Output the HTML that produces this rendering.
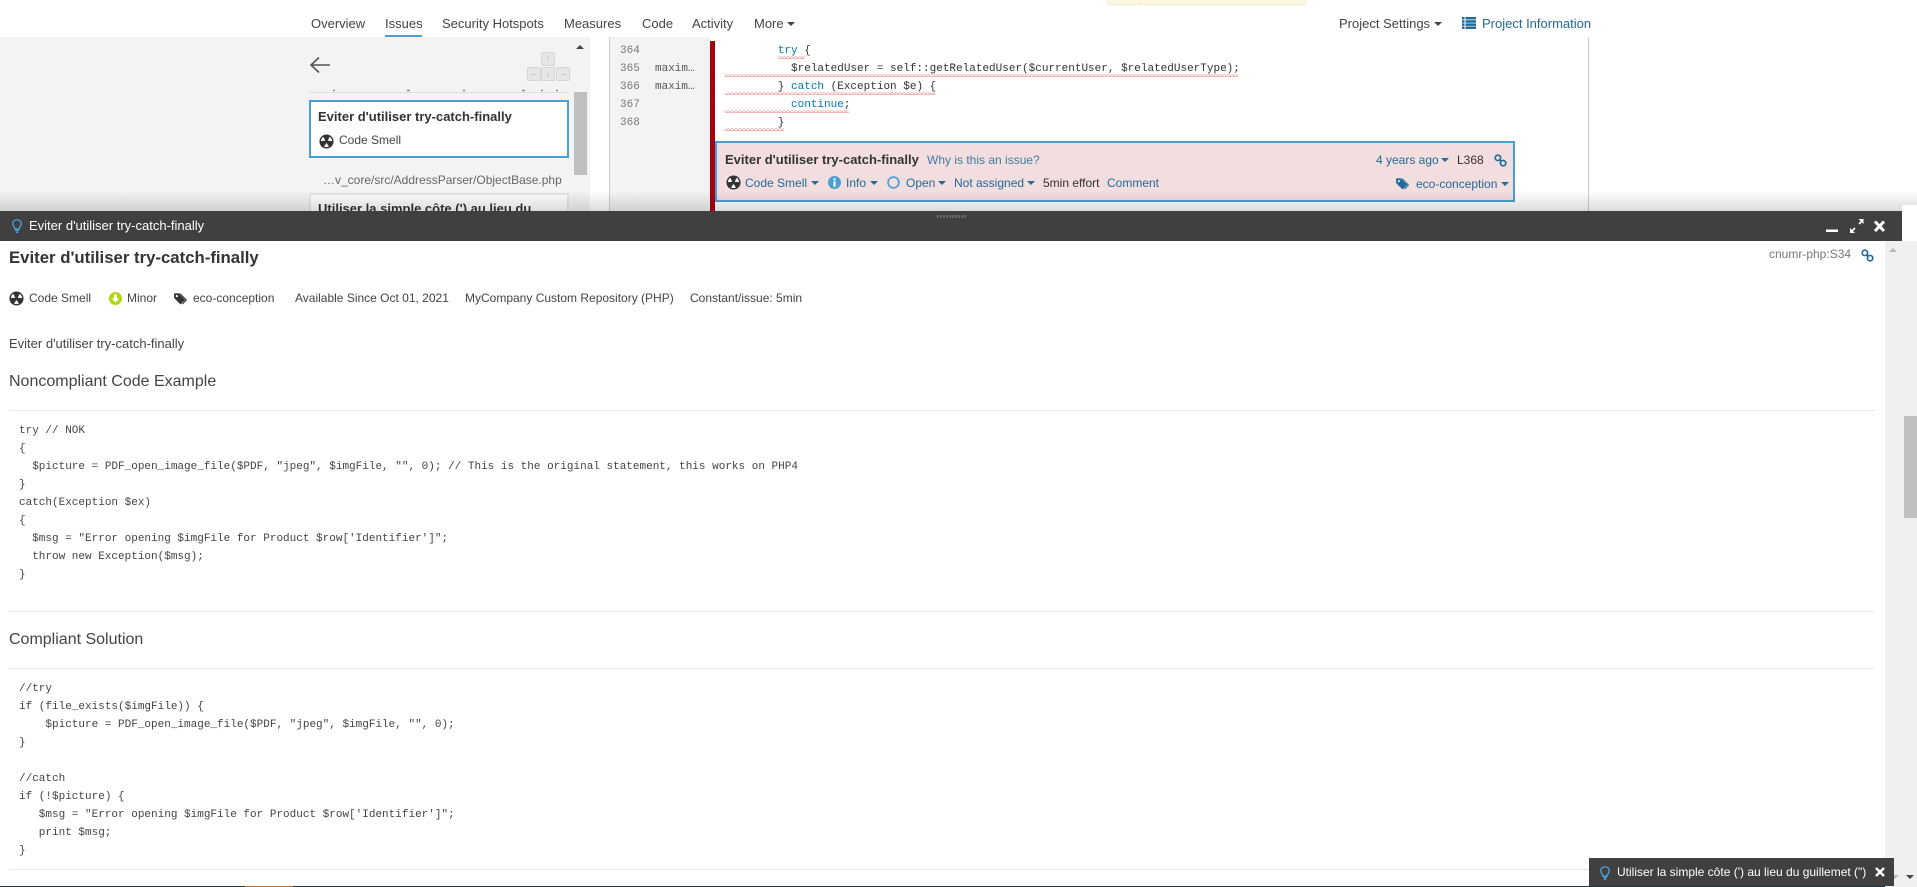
<!DOCTYPE html>
<html lang="en"><head><meta charset="utf-8"><title>Eviter d'utiliser try-catch-finally</title>
<style>
html,body{margin:0;padding:0;width:1917px;height:887px;overflow:hidden;background:#fff}
body{position:relative;font-family:"Liberation Sans",Arial,sans-serif;font-size:12px;color:#444}
.a{position:absolute}
.t{position:absolute;white-space:pre;line-height:18px;height:18px}
.n{font-size:13px;color:#444}
.l{color:#236a97}
.b{font-weight:700;font-size:13px;color:#333}
.m{font-family:"Liberation Mono",monospace;font-size:11px;white-space:pre}
.c{position:absolute;width:0;height:0;border-left:4px solid transparent;border-right:4px solid transparent;border-top:4px solid #444}
.c.bl{border-top-color:#236a97}
.key{position:absolute;box-sizing:border-box;width:14px;height:14px;background:#e6e6e6;border:1px solid #d6d6d6;border-radius:2px;color:#aaa;font-size:8px;line-height:12px;text-align:center}
.hr{position:absolute;left:9px;width:1866px;height:1px;background:#e6e6e6}
.kw{color:#0077b3}
svg{position:absolute;overflow:visible}
</style></head><body>
<svg width="0" height="0" style="left:0;top:0"><defs>
<symbol id="smell" viewBox="0 0 16 16"><circle cx="8" cy="8" r="7.500" fill="#333"/><g fill="#fff"><path d="M8 9.500L5.400 13.300a5.400 5.400 0 0 0 5.200 0z"/><path d="M8 9.500L5.400 13.300a5.400 5.400 0 0 0 5.200 0z" transform="rotate(120 8 8)"/><path d="M8 9.500L5.400 13.300a5.400 5.400 0 0 0 5.200 0z" transform="rotate(-120 8 8)"/></g></symbol>
<symbol id="link" viewBox="0 0 14 14"><g fill="none" stroke="currentColor" stroke-width="1.800"><circle cx="4.200" cy="4.200" r="2.900"/><circle cx="9.800" cy="9.800" r="2.900"/><path d="M5.800 5.800l2.400 2.400"/></g></symbol>
<symbol id="tags" viewBox="0 0 16 14"><path fill="currentColor" d="M0 1.500V6.500L7 13.500 12 8.500 5 1.500zM3 3.200a1.200 1.200 0 1 1 0 2.400 1.200 1.200 0 0 1 0-2.400z"/><path fill="currentColor" d="M6.800 1.500L14 8.600 9.600 13.300 8.700 12.700 12.400 8.600 5.300 1.500z"/></symbol>
<symbol id="bulb" viewBox="0 0 10 14"><path fill="none" stroke="#4b9fd5" stroke-width="1.400" d="M5 .8C2.500.8.800 2.500.8 4.700c0 2.300 1.900 3.200 2.200 5.400h4c.3-2.200 2.200-3.100 2.200-5.400C9.200 2.500 7.500.8 5 .8z"/><path fill="#4b9fd5" d="M3 10.800h4v1.200H3zM3.700 12.500h2.600V14H3.700z"/></symbol>
<pattern id="z" width="4" height="3" patternUnits="userSpaceOnUse"><path d="M0 2.500L2 .5L4 2.500" fill="none" stroke="#ee9a9a" stroke-width="1"/></pattern>
</defs></svg>

<!-- top nav -->
<div class="a" style="left:1107px;top:0;width:198px;height:4px;background:#fcf8e3;border:1px solid #faebcc;border-top:0;border-radius:0 0 2px 2px"></div>
<div class="a" style="left:1140px;top:0;width:1px;height:5px;background:#faebcc"></div>
<div class="t n" style="left:311px;top:15px">Overview</div>
<div class="t n" style="left:385px;top:15px">Issues</div>
<div class="a" style="left:385px;top:35px;width:37px;height:3px;background:#4b9fd5"></div>
<div class="t n" style="left:442px;top:15px">Security Hotspots</div>
<div class="t n" style="left:564px;top:15px">Measures</div>
<div class="t n" style="left:642px;top:15px">Code</div>
<div class="t n" style="left:692px;top:15px">Activity</div>
<div class="t n" style="left:754px;top:15px">More</div><div class="c" style="left:787px;top:22px"></div>
<div class="t n" style="left:1339px;top:15px">Project Settings</div><div class="c" style="left:1434px;top:22px"></div>
<svg style="left:1462px;top:17px" width="14" height="12" viewBox="0 0 14 12"><path fill="#236a97" d="M0 0h2.500v2.500H0zM3.500 0H14v2.500H3.500zM0 3.200h2.500v2.500H0zM3.500 3.200H14v2.500H3.500zM0 6.400h2.500v2.500H0zM3.500 6.400H14v2.500H3.500zM0 9.500h2.500V12H0zM3.500 9.500H14V12H3.500z"/></svg>
<div class="t n l" style="left:1482px;top:15px">Project Information</div>

<!-- sidebar -->
<div class="a" style="left:0;top:37px;width:590px;height:174px;background:#f3f3f3"></div>
<div class="a" style="left:609px;top:37px;width:1px;height:174px;background:#ccc"></div>
<div class="a" style="left:610px;top:37px;width:100px;height:174px;background:#f3f3f3"></div>
<div class="a" style="left:1588px;top:37px;width:1px;height:174px;background:#ccc"></div>
<svg style="left:309px;top:56px" width="22" height="18" viewBox="0 0 22 18"><path d="M10 1.500L2 9l8 7.500M2 9h19" fill="none" stroke="#555" stroke-width="1.600"/></svg>
<div class="key" style="left:541px;top:52px">↑</div>
<div class="key" style="left:527px;top:67px">←</div>
<div class="key" style="left:541px;top:67px">↓</div>
<div class="key" style="left:556px;top:67px">→</div>
<div class="a" style="left:574px;top:92px;width:13px;height:83px;background:#bfbfbf"></div>
<div class="a" style="left:576px;top:45px;width:0;height:0;border-left:4px solid transparent;border-right:4px solid transparent;border-bottom:4px solid #444"></div>
<div class="a" style="left:309px;top:92px;width:260px;height:1px;background:#ddd"></div>
<svg style="left:0;top:0" width="600" height="100"><path d="M333 90.500h2M407 90.500h3M463 90.500h2M522 90.500h3M541 90.500h2M556 90.500h2" stroke="#888" stroke-width="1.500"/></svg>
<div class="a" style="left:309px;top:100px;width:256px;height:54px;background:#fff;border:2px solid #4b9fd5"></div>
<div class="t b" style="left:318px;top:108px">Eviter d'utiliser try-catch-finally</div>
<svg style="left:319px;top:134px" width="15" height="15"><use href="#smell"/></svg>
<div class="t" style="left:339px;top:131px">Code Smell</div>
<div class="t" style="left:323px;top:171px;color:#666">…v_core/src/AddressParser/ObjectBase.php</div>
<div class="a" style="left:309px;top:193px;width:256px;height:30px;background:#fff;border:2px solid #e6e6e6"></div>
<div class="t b" style="left:318px;top:200px">Utiliser la simple côte (') au lieu du</div>

<!-- code -->
<div class="t m" style="left:620px;top:42px;color:#777">364</div>
<div class="t m" style="left:620px;top:60px;color:#777">365</div>
<div class="t m" style="left:620px;top:78px;color:#777">366</div>
<div class="t m" style="left:620px;top:96px;color:#777">367</div>
<div class="t m" style="left:620px;top:114px;color:#777">368</div>
<div class="t m" style="left:655px;top:60px;color:#555">maxim…</div>
<div class="t m" style="left:655px;top:78px;color:#555">maxim…</div>
<div class="a" style="left:710px;top:41px;width:5px;height:170px;background:#a4030f"></div>
<div class="t m" style="left:725px;top:42px;color:#333">        <span class="kw">try</span> {</div>
<div class="t m" style="left:725px;top:60px;color:#333">          $relatedUser = self::getRelatedUser($currentUser, $relatedUserType);</div>
<div class="t m" style="left:725px;top:78px;color:#333">        } <span class="kw">catch</span> (Exception $e) {</div>
<div class="t m" style="left:725px;top:96px;color:#333">          <span class="kw">continue</span>;</div>
<div class="t m" style="left:725px;top:114px;color:#333">        }</div>
<svg style="left:0;top:0" width="1917" height="140"><g fill="url(#z)"><rect x="778" y="56" width="27" height="3"/><rect x="725" y="74" width="513" height="3"/><rect x="725" y="92" width="210" height="3"/><rect x="725" y="110" width="124" height="3"/><rect x="725" y="128" width="59" height="3"/></g></svg>

<!-- issue box -->
<div class="a" style="left:715px;top:141px;width:796px;height:57px;background:#f2dede;border:2px solid #4b9fd5"></div>
<div class="t b" style="left:725px;top:151px">Eviter d'utiliser try-catch-finally</div>
<div class="t l" style="left:927px;top:151px;opacity:.85">Why is this an issue?</div>
<div class="t l" style="left:1376px;top:151px">4 years ago</div><div class="c bl" style="left:1441px;top:158px"></div>
<div class="t" style="left:1457px;top:151px;color:#333">L368</div>
<svg style="left:1494px;top:154px;color:#236a97" width="13" height="13"><use href="#link"/></svg>
<svg style="left:726px;top:175px" width="15" height="15"><use href="#smell"/></svg>
<div class="t l" style="left:745px;top:174px">Code Smell</div><div class="c bl" style="left:811px;top:181px"></div>
<svg style="left:828px;top:176px" width="13" height="13" viewBox="0 0 13 13"><circle cx="6.500" cy="6.500" r="6.500" fill="#4b9fd5"/><path d="M5.500 2.200h2v2h-2zM5.500 5.200h2v5.600h-2z" fill="#fff"/></svg>
<div class="t l" style="left:846px;top:174px">Info</div><div class="c bl" style="left:870px;top:181px"></div>
<svg style="left:887px;top:176px" width="13" height="13" viewBox="0 0 13 13"><circle cx="6.500" cy="6.500" r="5.400" fill="none" stroke="#4b9fd5" stroke-width="1.700"/></svg>
<div class="t l" style="left:906px;top:174px">Open</div><div class="c bl" style="left:938px;top:181px"></div>
<div class="t l" style="left:954px;top:174px">Not assigned</div><div class="c bl" style="left:1027px;top:181px"></div>
<div class="t" style="left:1043px;top:174px;color:#333">5min effort</div>
<div class="t l" style="left:1107px;top:174px">Comment</div>
<svg style="left:1396px;top:177px;color:#236a97" width="15" height="13"><use href="#tags"/></svg>
<div class="t l" style="left:1416px;top:175px">eco-conception</div><div class="c bl" style="left:1501px;top:182px"></div>

<!-- shadow -->
<div class="a" style="left:0;top:191px;width:1917px;height:20px;background:linear-gradient(rgba(0,0,0,0),rgba(0,0,0,.14))"></div>

<!-- modal -->
<div class="a" style="left:0;top:211px;width:1902px;height:30px;background:#404040"></div>
<div class="a" style="left:1902px;top:205px;width:15px;height:36px;background:#fff"></div>
<div class="a" style="left:937px;top:215px;width:29px;height:3px;background:repeating-linear-gradient(90deg,#666 0 2px,transparent 2px 3px)"></div>
<svg style="left:12px;top:219px" width="10" height="14"><use href="#bulb"/></svg>
<div class="t" style="left:29px;top:217px;color:#fff;font-size:13px">Eviter d'utiliser try-catch-finally</div>
<svg style="left:1826px;top:219px" width="62" height="14" viewBox="0 0 62 14"><path d="M0 10.500h12v2.500H0z" fill="#fff"/><path d="M25 13l4-4M33 5l3.500-3.500" stroke="#fff" stroke-width="1.600"/><path d="M24 9v5h5zM37.500 5V0h-5z" fill="#fff"/><path d="M49 2.500l9 9.500M58 2.500l-9 9.500" stroke="#fff" stroke-width="3"/></svg>

<div class="a" style="left:0;top:241px;width:1885px;height:645px;background:#fff"></div>
<div class="a" style="left:1885px;top:241px;width:32px;height:646px;background:#f0f0f0"></div>
<div class="a" style="left:1904px;top:416px;width:13px;height:102px;background:#bfbfbf"></div>
<div class="a" style="left:1889px;top:248px;width:0;height:0;border-left:4px solid transparent;border-right:4px solid transparent;border-bottom:4px solid #bbb"></div>
<div class="a" style="left:1891px;top:875px;width:0;height:0;border-left:4px solid transparent;border-right:4px solid transparent;border-top:4px solid #bbb"></div>
<div class="a" style="left:1906px;top:875px;width:0;height:0;border-left:4px solid transparent;border-right:4px solid transparent;border-top:4px solid #444"></div>

<div class="t" style="left:9px;top:249px;font-size:16.750px;font-weight:700;color:#333">Eviter d'utiliser try-catch-finally</div>
<div class="t" style="left:1769px;top:245px;color:#777">cnumr-php:S34</div>
<svg style="left:1861px;top:249px;color:#236a97" width="13" height="13"><use href="#link"/></svg>

<svg style="left:9px;top:291px" width="15" height="15"><use href="#smell"/></svg>
<div class="t" style="left:29px;top:289px">Code Smell</div>
<svg style="left:109px;top:292px" width="13" height="13" viewBox="0 0 13 13"><circle cx="6.500" cy="6.500" r="6.500" fill="#b0d513"/><path d="M5 2.500h3v4h2.300L6.500 10.500 2.700 6.500H5z" fill="#fff"/></svg>
<div class="t" style="left:127px;top:289px">Minor</div>
<svg style="left:174px;top:292px;color:#333" width="15" height="13"><use href="#tags"/></svg>
<div class="t" style="left:193px;top:289px">eco-conception</div>
<div class="t" style="left:295px;top:289px">Available Since Oct 01, 2021</div>
<div class="t" style="left:465px;top:289px">MyCompany Custom Repository (PHP)</div>
<div class="t" style="left:690px;top:289px">Constant/issue: 5min</div>

<div class="t" style="left:9px;top:335px;font-size:13px">Eviter d'utiliser try-catch-finally</div>
<div class="t" style="left:9px;top:373px;font-size:16px">Noncompliant Code Example</div>
<div class="hr" style="top:410px"></div>
<div class="a m" style="left:19px;top:422px;line-height:18px;color:#444">try // NOK
{
  $picture = PDF_open_image_file($PDF, "jpeg", $imgFile, "", 0); // This is the original statement, this works on PHP4
}
catch(Exception $ex)
{
  $msg = "Error opening $imgFile for Product $row['Identifier']";
  throw new Exception($msg);
}</div>
<div class="hr" style="top:611px"></div>
<div class="t" style="left:9px;top:631px;font-size:16px">Compliant Solution</div>
<div class="hr" style="top:668px"></div>
<div class="a m" style="left:19px;top:680px;line-height:18px;color:#444">//try
if (file_exists($imgFile)) {
    $picture = PDF_open_image_file($PDF, "jpeg", $imgFile, "", 0);
}

//catch
if (!$picture) {
   $msg = "Error opening $imgFile for Product $row['Identifier']";
   print $msg;
}</div>
<div class="hr" style="top:869px"></div>

<!-- bottom -->
<div class="a" style="left:0;top:886px;width:1885px;height:1px;background:#1f3542"></div>
<div class="a" style="left:245px;top:886px;width:48px;height:1px;background:#b8702e"></div>
<div class="a" style="left:1589px;top:858px;width:305px;height:28px;background:#404040"></div>
<svg style="left:1600px;top:866px" width="10" height="14"><use href="#bulb"/></svg>
<div class="t" style="left:1617px;top:863px;color:#fff;font-size:12px">Utiliser la simple côte (') au lieu du guillemet (")</div>
<svg style="left:1875px;top:867px" width="10" height="10" viewBox="0 0 10 10"><path d="M1 1l8 8M9 1l-8 8" stroke="#fff" stroke-width="2.400"/></svg>
</body></html>
